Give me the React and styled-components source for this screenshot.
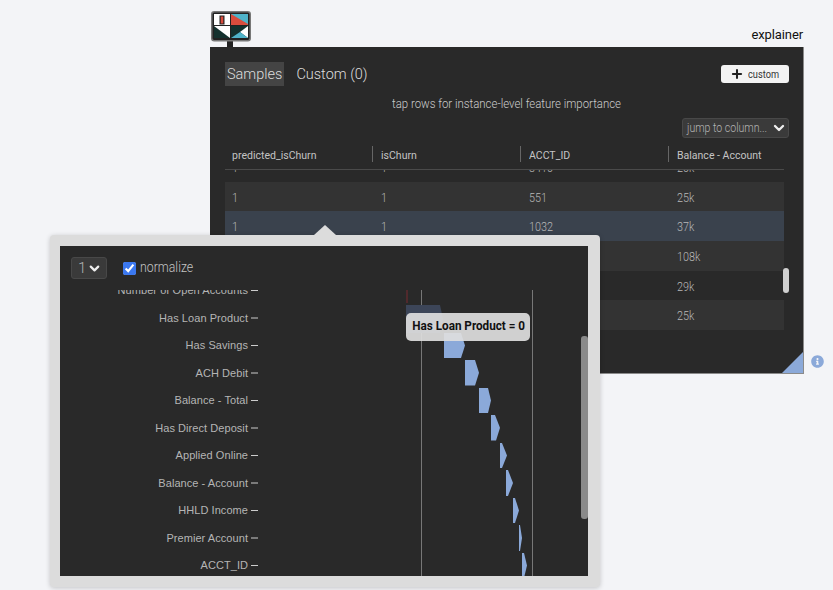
import React from "react";
import styled, { createGlobalStyle } from "styled-components";
import { ChevronDown, Plus } from "lucide-react";
import { FaInfoCircle } from "react-icons/fa";

const GlobalStyle = createGlobalStyle`
    html, body {
        margin: 0;
        background: #f3f4f7;
        font-family: 'Roboto', sans-serif;
    }
`;

const Stage = styled.div`
    position: relative;
    width: 833px;
    height: 590px;
    overflow: hidden;
    padding: 11px 0 0 210px;
    box-sizing: border-box;
`;

// the reference uses a condensed face, so squeeze Roboto to the same widths
const Narrow = styled.span`
    display: inline-block;
    white-space: nowrap;
    transform: scaleX(${(p) => p.$x || 0.9});
    transform-origin: ${(p) => (p.$center ? "center" : "left")};
`;

const TopRow = styled.div`
    display: flex;
    justify-content: space-between;
    align-items: flex-end;
    width: 594px;
    height: 36px;
`;

const LogoWrap = styled.div`
    margin-left: 1px;
    height: 36px;
`;

const Title = styled.div`
    font-size: 13px;
    line-height: 16px;
    color: #111;
    margin: 0 1px 4px 0;
    letter-spacing: -0.1px;
`;

const PanelRow = styled.div`
    display: flex;
    align-items: flex-end;
`;

const Panel = styled.div`
    width: 594px;
    height: 327px;
    box-sizing: border-box;
    position: relative;
    background: #292929;
    border-right: 1px solid #8a8a8a;
    border-bottom: 1px solid #8a8a8a;
    padding: 15px 14px 0 15px;
    color: #bbb;
`;

const Corner = styled.div`
    position: absolute;
    right: 0;
    bottom: 0;
    width: 0;
    height: 0;
    border-style: solid;
    border-width: 0 0 21px 21px;
    border-color: transparent transparent #8ba9d9 transparent;
`;

const InfoButton = styled.div`
    display: flex;
    color: #8ba9d9;
    font-size: 13px;
    margin: 0 0 6px 7px;
`;

const TabBar = styled.div`
    display: flex;
    justify-content: space-between;
    align-items: center;
    height: 24px;
`;

const Tabs = styled.div`
    display: flex;
    gap: 10px;
`;

const Tab = styled.div`
    height: 24px;
    font-size: 14.5px;
    font-weight: 300;
    line-height: 26px;
    padding: 0 2px;
    color: #ddd;
    background: ${(p) => (p.$active ? "#444" : "transparent")};
`;

const CustomButton = styled.button`
    display: flex;
    align-items: center;
    gap: 4px;
    width: 68px;
    height: 18px;
    padding: 0 0 0 9px;
    border: 0;
    border-radius: 3px;
    background: #f3f3f3;
    color: #333;
    font-family: inherit;
    font-size: 10.5px;
`;

const Hint = styled.div`
    text-align: center;
    font-size: 12px;
    font-weight: 300;
    line-height: 16px;
    margin-top: 10px;
    color: #ccc;
`;

const JumpRow = styled.div`
    display: flex;
    justify-content: flex-end;
    margin-top: 6px;
`;

const SelectBox = styled.div`
    display: flex;
    align-items: center;
    justify-content: space-between;
    box-sizing: border-box;
    background: #3a3a3a;
    border: 1px solid #484848;
    border-radius: 3px;
    color: #b5b5b5;
    font-weight: 300;
    svg {
        flex-shrink: 0;
    }
`;

const JumpSelect = styled(SelectBox)`
    width: 107px;
    height: 20px;
    padding: 0 2px 0 4px;
    font-size: 12px;
`;

const JumpText = styled(Narrow)`
    width: 84px;
`;

const Table = styled.div`
    width: 559px;
    margin-top: 8px;
`;

const HeadRow = styled.div`
    display: grid;
    grid-template-columns: 147px 148px 148px 116px;
    height: 23px;
    border-bottom: 1px solid #4a4a4a;
`;

const HeadCell = styled.div`
    font-size: 11.5px;
    line-height: 18px;
    height: 16px;
    padding-left: ${(p) => (p.$first ? "7px" : "8px")};
    color: #c4c4c4;
    border-left: ${(p) => (p.$first ? "0" : "1px solid #666")};
`;

const RowsClip = styled.div`
    height: 162px;
    overflow: hidden;
`;

const Rows = styled.div`
    margin-top: -18px;
`;

const Row = styled.div`
    display: grid;
    grid-template-columns: 147px 148px 148px 116px;
    height: 29.7px;
    align-items: center;
    font-size: 12px;
    font-weight: 300;
    color: #b8b8b8;
    background: ${(p) => (p.$selected ? "#3a424d" : p.$odd ? "#333" : "#292929")};
`;

const Cell = styled.div`
    padding: 2px 0 0 ${(p) => (p.$first ? "7px" : "9px")};
`;

const PanelScroll = styled.div`
    position: absolute;
    left: 573px;
    top: 221px;
    width: 6px;
    height: 25px;
    border-radius: 3px;
    background: #d0d0d0;
`;

const Popup = styled.div`
    position: absolute;
    left: 50px;
    top: 235px;
    width: 550px;
    height: 352px;
    box-sizing: border-box;
    padding: 11px 12px 11px 10px;
    background: #dcdcdc;
    border-radius: 4px;
    box-shadow: 0 1px 5px rgba(0, 0, 0, 0.2);
`;

const Notch = styled.div`
    position: absolute;
    left: 264px;
    top: -10px;
    width: 0;
    height: 0;
    border-style: solid;
    border-width: 0 11px 10px 11px;
    border-color: transparent transparent #dcdcdc transparent;
`;

const PopupInner = styled.div`
    position: relative;
    height: 100%;
    background: #292929;
    color: #bbb;
`;

const Controls = styled.div`
    display: flex;
    align-items: center;
    gap: 16px;
    height: 44px;
    padding-left: 11px;
    box-sizing: border-box;
`;

const PageSelect = styled(SelectBox)`
    width: 36px;
    height: 22px;
    padding: 0 4px 0 6px;
    font-size: 15px;
`;

const Normalize = styled.label`
    display: flex;
    align-items: center;
    gap: 4px;
    font-size: 14px;
    line-height: 16px;
    font-weight: 300;
    color: #c4c4c4;
    margin-top: -2px;
`;

const CheckBox = styled.input`
    width: 13px;
    height: 13px;
    margin: 2px 0 0;
    accent-color: #3b78f0;
`;

const ChartSvg = styled.svg`
    display: block;
`;

const AxisLabel = styled.text`
    font-family: 'Liberation Sans', sans-serif;
    font-size: 11px;
    letter-spacing: 0.06px;
    fill: #b5b5b5;
`;

const PopupScroll = styled.div`
    position: absolute;
    right: 0;
    top: 90px;
    width: 7px;
    height: 183px;
    border-radius: 3px;
    background: #8a8a8a;
`;

const Tooltip = styled.div`
    position: absolute;
    left: 346px;
    top: 67px;
    width: 124px;
    height: 28px;
    box-sizing: border-box;
    text-align: center;
    line-height: 26px;
    font-size: 13px;
    font-weight: 700;
    color: #111;
    background: rgba(222, 222, 222, 0.92);
    border-radius: 5px;
`;

const columns = ["predicted_isChurn", "isChurn", "ACCT_ID", "Balance - Account"];

const rows = [
    ["1", "1", "3410", "20k"],
    ["1", "1", "551", "25k"],
    ["1", "1", "1032", "37k"],
    ["", "", "", "108k"],
    ["", "", "", "29k"],
    ["", "", "", "25k"],
];

const features = [
    "Number of Open Accounts",
    "Has Loan Product",
    "Has Savings",
    "ACH Debit",
    "Balance - Total",
    "Has Direct Deposit",
    "Applied Online",
    "Balance - Account",
    "HHLD Income",
    "Premier Account",
    "ACCT_ID",
];

// x, top-right x, bottom-right x, tip x, top y, bottom y
const bars = [
    [444, 461, 461, 465, 333, 358],
    [465, 475, 475, 479, 360, 385.5],
    [479, 488, 488, 491, 388, 413],
    [491, 495, 496, 500, 415, 440.5],
    [500, 502, 502, 507, 443, 468],
    [506, 508, 508, 513, 470, 496],
    [513, 515, 515, 519, 498, 523],
    [519, 520, 520, 522, 525, 551],
    [522, 524, 524, 527, 553, 578],
];

function Logo() {
    return (
        <svg width="40" height="36" viewBox="0 0 40 36">
            <rect x="16" y="28" width="6" height="8" fill="#222" />
            <rect x="0.75" y="0.75" width="38.5" height="29" rx="2.5" fill="#222" stroke="#777" strokeWidth="1.5" />
            <rect x="3" y="3" width="16" height="11" fill="#fff" />
            <rect x="8.5" y="4.5" width="5" height="9" fill="#222" />
            <rect x="9.7" y="5.5" width="2.6" height="7" fill="#d94c3d" />
            <rect x="20" y="3" width="17" height="11" fill="#4fb3c9" />
            <polygon points="20,3 37,13 37,14 20,14" fill="#d94c3d" />
            <rect x="3" y="15" width="16" height="12" fill="#14312e" />
            <polygon points="3,15 19,27 19,15" fill="#fff" />
            <rect x="20" y="15" width="17" height="12" fill="#14312e" />
            <polygon points="37,15 37,27 29,21" fill="#fff" />
            <polygon points="20,27 29,21 37,27" fill="#4fb3c9" />
        </svg>
    );
}

function FeatureChart() {
    return (
        <ChartSvg width="521" height="286" viewBox="60 290 521 286">
            <line x1="421.5" y1="290" x2="421.5" y2="576" stroke="#777" />
            <line x1="532.5" y1="290" x2="532.5" y2="576" stroke="#777" />
            <line x1="407" y1="290" x2="407" y2="303" stroke="#7a2a30" />
            <polygon points="406,305 440,305 443,319 440,333 406,333" fill="#3c4558" />
            {bars.map(([x, tr, br, tip, top, bottom]) => (
                <polygon
                    key={top}
                    points={`${x},${top} ${tr},${top} ${tip},${(top + bottom) / 2} ${br},${bottom} ${x},${bottom}`}
                    fill="#8ba9d9"
                />
            ))}
            {features.map((name, i) => {
                const y = 290 + i * 27.5;
                return (
                    <g key={name}>
                        <AxisLabel x="248" y={y + 4} textAnchor="end">{name}</AxisLabel>
                        <line x1="251" y1={y + 0.5} x2="258" y2={y + 0.5} stroke="#ccc" />
                    </g>
                );
            })}
        </ChartSvg>
    );
}

export default function App() {
    return (
        <Stage>
            <GlobalStyle />
            <TopRow>
                <LogoWrap><Logo /></LogoWrap>
                <Title>explainer</Title>
            </TopRow>
            <PanelRow>
                <Panel>
                    <TabBar>
                        <Tabs>
                            <Tab $active>Samples</Tab>
                            <Tab>Custom (0)</Tab>
                        </Tabs>
                        <CustomButton>
                            <Plus size={14} strokeWidth={3.5} color="#222" />
                            <Narrow $x={0.88}>custom</Narrow>
                        </CustomButton>
                    </TabBar>
                    <Hint><Narrow $x={0.95} $center>tap rows for instance-level feature importance</Narrow></Hint>
                    <JumpRow>
                        <JumpSelect>
                            <JumpText $x={0.88}>jump to column...</JumpText>
                            <ChevronDown size={16} strokeWidth={3.5} color="#eee" />
                        </JumpSelect>
                    </JumpRow>
                    <Table>
                        <HeadRow>
                            {columns.map((c, i) => (
                                <HeadCell key={c} $first={i === 0}><Narrow $x={0.915}>{c}</Narrow></HeadCell>
                            ))}
                        </HeadRow>
                        <RowsClip>
                            <Rows>
                                {rows.map((r, i) => (
                                    <Row key={r[3] + i} $odd={i % 2 === 1} $selected={i === 2}>
                                        {r.map((v, j) => <Cell key={j} $first={j === 0}><Narrow>{v}</Narrow></Cell>)}
                                    </Row>
                                ))}
                            </Rows>
                        </RowsClip>
                    </Table>
                    <PanelScroll />
                    <Corner />
                </Panel>
                <InfoButton><FaInfoCircle /></InfoButton>
            </PanelRow>
            <Popup>
                <Notch />
                <PopupInner>
                    <Controls>
                        <PageSelect>1<ChevronDown size={15} strokeWidth={3.5} color="#eee" /></PageSelect>
                        <Normalize>
                            <CheckBox type="checkbox" defaultChecked />
                            <Narrow $x={0.88}>normalize</Narrow>
                        </Normalize>
                    </Controls>
                    <FeatureChart />
                    <PopupScroll />
                    <Tooltip><Narrow $x={0.9} $center>Has Loan Product = 0</Narrow></Tooltip>
                </PopupInner>
            </Popup>
        </Stage>
    );
}
